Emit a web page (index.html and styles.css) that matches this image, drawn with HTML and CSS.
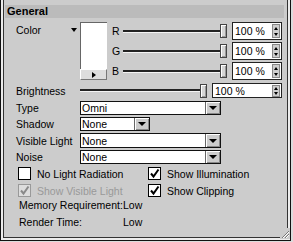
FILE: index.html
```html
<!DOCTYPE html>
<html lang="en">
<head>
  <meta charset="UTF-8">
  <title>Light Settings</title>
  <link rel="stylesheet" href="styles.css">
</head>
<body>

  <div class="window">
    <div class="panel">

      <div class="header">General</div>

      <!-- Color -->
      <div class="color-section">
        <div class="color-label"><span>Color</span><span class="menu-arrow"></span></div>
        <div class="swatch-col">
          <div class="swatch"></div>
          <div class="swatch-btn"><span class="play"></span></div>
        </div>
        <div class="rgb">
          <div class="rgb-row">
            <span class="chan">R</span>
            <div class="slider"><div class="track"></div><div class="thumb"></div></div>
            <div class="num"><span>100 %</span><span class="spin"><i class="up"></i><i class="down"></i></span></div>
          </div>
          <div class="rgb-row">
            <span class="chan">G</span>
            <div class="slider"><div class="track"></div><div class="thumb"></div></div>
            <div class="num"><span>100 %</span><span class="spin"><i class="up"></i><i class="down"></i></span></div>
          </div>
          <div class="rgb-row">
            <span class="chan">B</span>
            <div class="slider"><div class="track"></div><div class="thumb"></div></div>
            <div class="num"><span>100 %</span><span class="spin"><i class="up"></i><i class="down"></i></span></div>
          </div>
        </div>
      </div>

      <!-- Brightness -->
      <div class="bright-row">
        <span class="label">Brightness</span>
        <div class="slider long"><div class="track"></div><div class="thumb"></div></div>
        <div class="num wide"><span>100 %</span><span class="spin"><i class="up"></i><i class="down"></i></span></div>
      </div>

      <!-- Popups -->
      <div class="sel-row first">
        <span class="label">Type</span>
        <div class="select"><span>Omni</span><span class="drop"><i></i></span></div>
      </div>
      <div class="sel-row">
        <span class="label">Shadow</span>
        <div class="select short"><span>None</span><span class="drop"><i></i></span></div>
      </div>
      <div class="sel-row tall">
        <span class="label">Visible Light</span>
        <div class="select"><span>None</span><span class="drop"><i></i></span></div>
      </div>
      <div class="sel-row">
        <span class="label">Noise</span>
        <div class="select"><span>None</span><span class="drop"><i></i></span></div>
      </div>

      <!-- Checkboxes -->
      <div class="checks">
        <div class="check"><span class="box"></span>No Light Radiation</div>
        <div class="check"><span class="box"><svg width="11" height="11" viewBox="0 0 11 11"><path d="M2 5.5 L4.5 8.5 L9.5 1.5" fill="none" stroke="#000" stroke-width="2"/></svg></span>Show Illumination</div>
        <div class="check disabled"><span class="box"><svg width="11" height="11" viewBox="0 0 11 11"><path d="M2 5.5 L4.5 8.5 L9.5 1.5" fill="none" stroke="#8a8a8a" stroke-width="2"/></svg></span>Show Visible Light</div>
        <div class="check"><span class="box"><svg width="11" height="11" viewBox="0 0 11 11"><path d="M2 5.5 L4.5 8.5 L9.5 1.5" fill="none" stroke="#000" stroke-width="2"/></svg></span>Show Clipping</div>
      </div>

      <!-- Info -->
      <div class="info">
        <span>Memory Requirement:</span><span>Low</span>
        <span>Render Time:</span><span>Low</span>
      </div>

    </div>

    <div class="grip">
      <svg width="10" height="11" viewBox="0 0 10 11">
        <path d="M9 3 L2 10 M9 6 L5 10" stroke="#777" stroke-width="1"/>
        <path d="M9 4 L3 10 M9 7 L6 10" stroke="#fff" stroke-width="1"/>
      </svg>
    </div>
  </div>

</body>
</html>
```

FILE: styles.css
```css
body {
  margin: 0;
  background-color: #dcdcdc;
  font-family: "Liberation Sans", Arial, sans-serif;
  font-size: 10.5px;
  color: #000;
}

.window {
  position: relative;
  width: 291px;
  height: 241px;
  box-sizing: border-box;
  border: 1px solid #111;
  border-top: none;
  background-color: #ececec;
  padding: 0 2px 2px 2px;
}

.panel {
  height: 100%;
  box-sizing: border-box;
  border: 1px solid #333;
  border-top: none;
  background-color: #cccccc;
  display: flex;
  flex-direction: column;
}

.header {
  margin: 5px 3px 0 1px;
  height: 13px;
  line-height: 13px;
  padding-left: 2px;
  background-color: #bbbbbb;
  font-weight: bold;
  font-size: 11px;
}

/* color block */
.color-section {
  display: flex;
  margin-top: 4px;
  padding-left: 12px;
}

.color-label {
  width: 64px;
  height: 16px;
  box-sizing: border-box;
  padding-right: 3px;
  display: flex;
  align-items: center;
  justify-content: space-between;
}

.menu-arrow {
  width: 0;
  height: 0;
  border-left: 3px solid transparent;
  border-right: 3px solid transparent;
  border-top: 4px solid #000;
}

.swatch-col {
  width: 27px;
}

.swatch {
  height: 47px;
  box-sizing: border-box;
  background-color: #fff;
  border-top: 1px solid #666;
  border-left: 1px solid #666;
}

.swatch-btn {
  height: 11px;
  box-sizing: border-box;
  background-color: #dddddd;
  border: 1px solid;
  border-color: #fff #777 #777 #fff;
  display: flex;
  align-items: center;
  justify-content: center;
}

.play {
  width: 0;
  height: 0;
  border-top: 3px solid transparent;
  border-bottom: 3px solid transparent;
  border-left: 4px solid #000;
}

.rgb {
  margin-left: 5px;
  display: flex;
  flex-direction: column;
  gap: 2px;
}

.rgb-row {
  display: flex;
  align-items: center;
  height: 18px;
}

.chan {
  width: 11px;
}

/* sliders */
.slider {
  width: 104px;
  display: flex;
  align-items: center;
}

.slider.long {
  width: 127px;
}

.track {
  flex: 1;
  height: 2px;
  background-color: #222;
  border-bottom: 1px solid #f4f4f4;
}

.thumb {
  width: 7px;
  height: 14px;
  box-sizing: border-box;
  background-color: #d6d6d6;
  border: 1px solid #444;
  box-shadow: inset 1px 1px #fff, inset -1px -1px #999;
}

/* number fields */
.num {
  margin-left: 5px;
  width: 50px;
  height: 18px;
  box-sizing: border-box;
  border: 1px solid #222;
  background-color: #fff;
  padding: 0 1px 0 2px;
  display: flex;
  align-items: center;
  justify-content: space-between;
}

.num.wide {
  width: 70px;
  height: 15px;
}

.spin {
  width: 8px;
  height: 14px;
  box-sizing: border-box;
  background-color: #cfcfcf;
  border: 1px solid #888;
  display: flex;
  flex-direction: column;
  align-items: center;
  justify-content: space-around;
}

.num.wide .spin {
  height: 12px;
}

.spin i {
  width: 0;
  height: 0;
  border-left: 2px solid transparent;
  border-right: 2px solid transparent;
}

.spin .up {
  border-bottom: 3px solid #000;
}

.spin .down {
  border-top: 3px solid #000;
}

/* label rows */
.label {
  width: 64px;
  flex-shrink: 0;
}

.bright-row {
  display: flex;
  align-items: center;
  height: 15px;
  margin-top: 3px;
  padding-left: 12px;
}

.sel-row {
  display: flex;
  align-items: center;
  margin-top: 2px;
  padding-left: 12px;
}

.sel-row.first {
  margin-top: 3px;
}

.select {
  width: 141px;
  height: 14px;
  box-sizing: border-box;
  border: 1px solid #111;
  background-color: #fff;
  padding-left: 1px;
  display: flex;
  align-items: center;
  justify-content: space-between;
}

.sel-row.tall .select {
  height: 15px;
}

.select.short {
  width: 70px;
}

.drop {
  width: 15px;
  height: 100%;
  box-sizing: border-box;
  background-color: #cccccc;
  border-left: 1px solid #666;
  box-shadow: inset 1px 1px #fff, inset -1px -1px #888;
  display: flex;
  align-items: center;
  justify-content: center;
}

.drop i {
  width: 0;
  height: 0;
  border-left: 4px solid transparent;
  border-right: 4px solid transparent;
  border-top: 4px solid #000;
}

/* checkboxes */
.checks {
  display: grid;
  grid-template-columns: 130px auto;
  row-gap: 4px;
  margin-top: 3px;
  padding-left: 14px;
}

.check {
  display: flex;
  align-items: center;
  gap: 6px;
  height: 13px;
}

.box {
  width: 13px;
  height: 13px;
  box-sizing: border-box;
  border: 1px solid #000;
  background-color: #fff;
  display: flex;
  align-items: center;
  justify-content: center;
}

.check.disabled {
  color: #999;
}

.check.disabled .box {
  border-color: #999;
  background-color: #ddd;
}

/* info */
.info {
  display: grid;
  grid-template-columns: 104px auto;
  row-gap: 5px;
  line-height: 12px;
  margin-top: 2px;
  padding-left: 15px;
}

.grip {
  position: absolute;
  right: 0;
  bottom: 1px;
  width: 10px;
  height: 11px;
  background-color: #cccccc;
}
```
